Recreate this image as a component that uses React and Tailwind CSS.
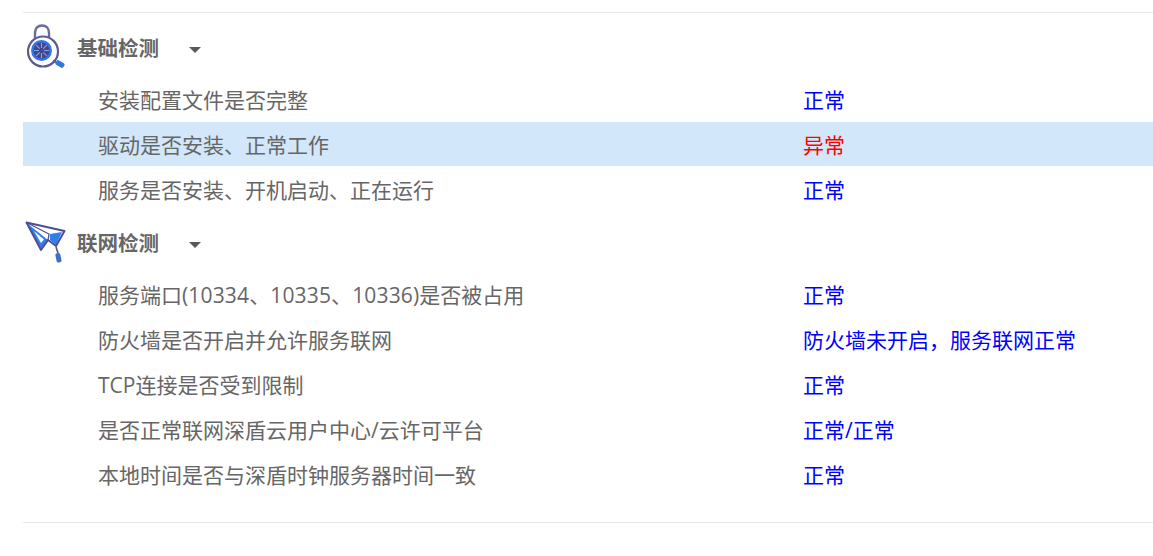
import React from "react";

function LockIcon() {
  return (
    <svg width="42" height="50" viewBox="0 0 42 50" fill="none">
      <path d="M10 17 V9 C10 4 13 1.5 17 1.5 C21 1.5 24 4 24 9 V17" stroke="#6b6a9c" strokeWidth="2.4" />
      <circle cx="18" cy="27.5" r="15" fill="#fff" stroke="#5b5a92" strokeWidth="2.2" />
      <circle cx="16.5" cy="26.5" r="10.5" fill="#2f78e6" />
      <circle cx="16.5" cy="26.5" r="8" fill="#44458c" />
      <path d="M16.5 19 V24 M16.5 29 V34 M9 26.5 H14 M19 26.5 H24 M11.2 21.2 L14.7 24.7 M18.3 28.3 L21.8 31.8 M21.8 21.2 L18.3 24.7 M14.7 28.3 L11.2 31.8" stroke="#7fa8ec" strokeWidth="1.1" />
      <path d="M28 36.5 L31 38.5" stroke="#5b5a92" strokeWidth="2" />
      <rect x="30.5" y="37.5" width="9" height="5" rx="1.5" transform="rotate(30 35 40)" fill="#2f78d8" />
    </svg>
  );
}

function PlaneIcon() {
  return (
    <svg width="42" height="46" viewBox="0 0 42 46" fill="none">
      <path d="M1.5 1.5 L39.5 10 L31 25 L23 19 L16 29 Z" fill="#fff" />
      <path d="M3 3 L23 19 L16 28 Z" fill="#2f7fe8" />
      <path d="M9 10 L19 18.5 L16 22 Z" fill="#fff" />
      <path d="M25 13 L37 11 L31 24 L25 19 Z" fill="#2f7fe8" />
      <path d="M1.5 1.5 L39.5 10 L31 25 L23 19 L16 29 Z" stroke="#4c4f93" strokeWidth="2" strokeLinejoin="round" />
      <path d="M1.5 1.5 L24 13 L23 19" stroke="#4c4f93" strokeWidth="1.3" />
      <path d="M31 26 L33 32" stroke="#4c4f93" strokeWidth="1.6" />
      <rect x="31" y="32" width="5" height="9.5" rx="2" transform="rotate(-12 33.5 37)" fill="#3b6fc4" />
    </svg>
  );
}

function Header({ icon, title, className }) {
  return (
    <div className={`flex items-center h-[45px] pl-[2px] ${className}`}>
      <div className="w-[52px] h-[45px] flex items-center">{icon}</div>
      <span className="text-[20.5px] w-[84px] font-bold text-[#666666] whitespace-nowrap">{title}</span>
      <span className="ml-[28px] mt-[2px] w-0 h-0 border-x-[6px] border-x-transparent border-t-[6px] border-t-[#595959]" />
    </div>
  );
}

function Row({ label, value, error, active }) {
  return (
    <div className={`flex items-center h-[45px] pl-[75px] ${active ? "bg-[#d2e7f9] border-b border-white pt-[3px]" : "pt-[2px]"}`}>
      <span className="w-[705px] text-[#666666] whitespace-nowrap">{label}</span>
      <span className={`whitespace-nowrap ${error ? "text-[#ff0000]" : "text-[#0000ff]"}`}>{value}</span>
    </div>
  );
}

export default function App() {
  return (
    <div className="w-[1153px] h-[556px] bg-white overflow-hidden pl-[23px] pt-[12px] text-[21px] font-['Open_Sans','Noto_Sans_CJK_SC',sans-serif]">
      <div className="border-t border-b border-[#e8e8e8] h-[511px]">
        <Header icon={<LockIcon />} title="基础检测" className="mt-[13px]" />
        <div className="mt-[6px]">
          <Row label="安装配置文件是否完整" value="正常" />
          <Row label="驱动是否安装、正常工作" value="异常" error active />
          <Row label="服务是否安装、开机启动、正在运行" value="正常" />
        </div>

        <Header icon={<PlaneIcon />} title="联网检测" className="mt-[9px]" />
        <div className="mt-[6px]">
          <Row
            label={<>服务端口<span className="tracking-[0.15px]">(10334、10335、10336)</span>是否被占用</>}
            value="正常"
          />
          <Row label="防火墙是否开启并允许服务联网" value="防火墙未开启，服务联网正常" />
          <Row label="TCP连接是否受到限制" value="正常" />
          <Row label="是否正常联网深盾云用户中心/云许可平台" value="正常/正常" />
          <Row label="本地时间是否与深盾时钟服务器时间一致" value="正常" />
        </div>
      </div>
    </div>
  );
}
